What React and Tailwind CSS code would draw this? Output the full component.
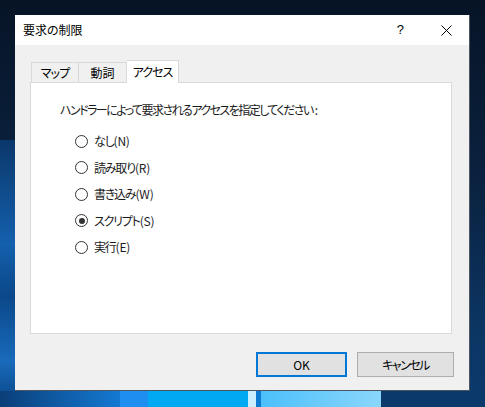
import React from "react";

const font = { fontFamily: '"Noto Sans CJK JP", "Noto Sans", sans-serif' };

function Radio({ jp, en, checked }) {
  return (
    <div className="flex items-center h-[26.5px]">
      <span className="w-[13px] h-[13px] rounded-full border border-[#333333] bg-white flex items-center justify-center">
        {checked && <span className="w-[6px] h-[6px] rounded-full bg-[#333333]" />}
      </span>
      <span className="ml-[6px] text-[12px] text-[#1a1a1a] leading-none">
        <span className="tracking-[-1.2px]">{jp}</span>
        <span className="tracking-[-0.2px]">{en}</span>
      </span>
    </div>
  );
}

export default function App() {
  return (
    <div
      className="relative w-[485px] h-[407px] overflow-hidden bg-[linear-gradient(180deg,#071426_0%,#0a2240_45%,#0c3563_80%,#0b3a6c_100%)] [font-feature-settings:'palt']"
      style={font}
    >
      {/* desktop light streaks */}
      <div className="absolute left-0 top-[140px] w-[15px] h-[260px] bg-[linear-gradient(180deg,#0b3a70,#1566b8_40%,#0a4a8e_60%,#1a70c4_85%,#0a4a8e)] opacity-90" />
      <div className="absolute left-[0px] top-[391px] w-[120px] h-[16px] bg-[linear-gradient(90deg,#0a3e78,#1479d2)]" />
      <div className="absolute left-[120px] top-[391px] w-[28px] h-[16px] bg-[#1e8ef0]" />
      <div className="absolute left-[148px] top-[391px] w-[100px] h-[16px] bg-[#00a9f2]" />
      <div className="absolute left-[248px] top-[391px] w-[8px] h-[16px] bg-[#cbeeff]" />
      <div className="absolute left-[256px] top-[391px] w-[5px] h-[16px] bg-[#0b7ad0]" />
      <div className="absolute left-[261px] top-[391px] w-[120px] h-[16px] bg-[linear-gradient(90deg,#4cc0fb,#8ad6fb)]" />

      <div className="pl-[15px] pt-[15px] relative">
        <div className="w-[455px] h-[376px] flex flex-col bg-[#f0f0f0] border-b border-r border-[#4d5561]">
          {/* title bar */}
          <div className="h-[30px] bg-white flex items-center pl-[8px] pr-[12px]">
            <span className="text-[12px] text-black">要求の制限</span>
            <span className="ml-auto mr-[37px] text-[13px] text-black" style={{ fontFamily: '"Liberation Sans", sans-serif' }}>?</span>
            <svg width="11" height="11" viewBox="0 0 11 11" className="mr-[5px]">
              <path d="M0.5 0.5 L10.5 10.5 M10.5 0.5 L0.5 10.5" stroke="#000" strokeWidth="1" />
            </svg>
          </div>

          {/* body */}
          <div className="flex-1 flex flex-col pl-[15px] pr-[17px] pt-[15px]">
            {/* tabs */}
            <div className="flex items-end h-[22px] pl-[1px] relative z-10">
              <div className="h-[20px] w-[48px] border border-b-0 border-[#d9d9d9] bg-[#f0f0f0] flex items-center justify-center text-[12px] text-black tracking-[-0.8px]">マップ</div>
              <div className="h-[20px] w-[48px] border border-b-0 border-l-0 border-[#d9d9d9] bg-[#f0f0f0] flex items-center justify-center text-[12px] text-black">動詞</div>
              <div className="h-[23px] w-[52px] -mb-[1px] border border-b-0 border-l-0 border-[#d9d9d9] bg-white flex items-start pt-[2px] justify-center text-[12px] text-black tracking-[-1px]">アクセス</div>
            </div>
            <div className="h-[252px] bg-white border border-[#d9d9d9] pl-[29px] pt-[21px]">
              <div className="text-[12px] text-[#1a1a1a] leading-none h-[16px]">
                <span className="tracking-[-1.55px]">ハンドラーによって要求されるアクセスを指定してください</span>
                <span className="ml-[2px]">:</span>
              </div>
              <div className="pl-[15px] pt-[8px] flex flex-col">
                <Radio jp="なし" en="(N)" />
                <Radio jp="読み取り" en="(R)" />
                <Radio jp="書き込み" en="(W)" />
                <Radio jp="スクリプト" en="(S)" checked />
                <Radio jp="実行" en="(E)" />
              </div>
            </div>

            {/* buttons */}
            <div className="flex justify-end gap-[10px] mt-[18px] -mr-[2px]">
              <button className="w-[91px] h-[25px] bg-[#e1e1e1] border-2 border-[#0078d7] text-[12px] text-black">OK</button>
              <button className="w-[97px] h-[25px] bg-[#e1e1e1] border border-[#adadad] text-[12px] text-black tracking-[-1.5px]">キャンセル</button>
            </div>
          </div>
        </div>
      </div>
    </div>
  );
}
